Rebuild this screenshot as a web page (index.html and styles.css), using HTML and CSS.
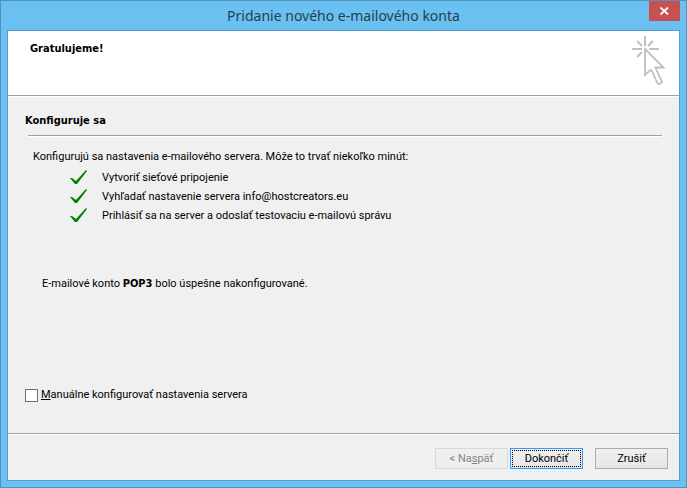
FILE: index.html
```html
<!DOCTYPE html>
<html lang="sk">
<head>
  <meta charset="UTF-8">
  <title>Pridanie nového e-mailového konta</title>
  <link rel="stylesheet" href="styles.css">
</head>
<body>
<div class="window">
  <div class="title-bar">
    <h1>Pridanie nového e-mailového konta</h1>
    <button type="button" class="close" aria-label="Zavrieť">
      <svg width="9" height="8" viewBox="0 0 9 8">
        <path d="M0.5 0.5L8 7.5M8 0.5L0.5 7.5" stroke="#fff" stroke-width="1.8"/>
      </svg>
    </button>
  </div>
  <form class="dialog">
    <div class="header">
      <h2>Gratulujeme!</h2>
      <svg class="wizard-icon" width="34" height="50" viewBox="0 0 34 50" fill="none" stroke="#c0c0c0">
        <path d="M13 0V10M0 13H10M17 13H27M5 5L10 10M21 5L16 10M5 21L10 16" stroke-width="2"/>
        <path d="M13 13V39L18.5 34L20 35L25.5 47.5Q28 49 30 46L24.5 34L23.5 31.5H31.5Z" stroke-width="1.8"/>
      </svg>
    </div>
    <div class="content">
      <h3>Konfiguruje sa</h3>
      <hr>
      <p class="intro">Konfigurujú sa nastavenia e-mailového servera. Môže to trvať niekoľko minút:</p>
      <ul class="steps">
        <li>
          <svg class="check" width="18" height="15" viewBox="0 0 18 15"><path d="M0 8L2 8L6 11L16 0L17 1L7 14L5 14Z" fill="#008000"/></svg>
          Vytvoriť sieťové pripojenie
        </li>
        <li>
          <svg class="check" width="18" height="15" viewBox="0 0 18 15"><path d="M0 8L2 8L6 11L16 0L17 1L7 14L5 14Z" fill="#008000"/></svg>
          Vyhľadať nastavenie servera info@hostcreators.eu
        </li>
        <li>
          <svg class="check" width="18" height="15" viewBox="0 0 18 15"><path d="M0 8L2 8L6 11L16 0L17 1L7 14L5 14Z" fill="#008000"/></svg>
          Prihlásiť sa na server a odoslať testovaciu e-mailovú správu
        </li>
      </ul>
      <p class="result">E-mailové konto <b>POP3</b> bolo úspešne nakonfigurované.</p>
      <label class="manual"><input type="checkbox"><span><u>M</u>anuálne konfigurovať nastavenia servera</span></label>
    </div>
    <div class="footer">
      <button type="button" disabled>&lt; Na<u>s</u>päť</button>
      <button type="button" class="default">Dokončiť</button>
      <button type="button" class="cancel">Zrušiť</button>
    </div>
  </form>
</div>
</body>
</html>
```
FILE: styles.css
```css
* {
  box-sizing: border-box;
}
body {
  margin: 0;
  font: 11px/14px Roboto, sans-serif;
  color: #000;
}
h1, h2, h3, p, ul {
  margin: 0;
  padding: 0;
}
.window {
  display: flex;
  flex-direction: column;
  min-height: 100vh;
  padding: 0 6px 6px;
  border: 1px solid #5092b8;
  background: #69c0f1;
}
.title-bar {
  position: relative;
  height: 29px;
}
h1 {
  font: 14px/29px "Noto Sans", sans-serif;
  text-align: center;
  color: #24404f;
}
.close {
  position: absolute;
  top: 0;
  right: 0;
  display: flex;
  align-items: center;
  justify-content: center;
  width: 31px;
  height: 20px;
  padding: 0;
  border: 0;
  background: #c75050;
}
.dialog {
  flex: 1;
  display: flex;
  flex-direction: column;
  border: 1px solid #519fca;
  background: #f0f0f0;
}
.header {
  display: flex;
  justify-content: space-between;
  height: 65px;
  padding: 5px 13px 0 22px;
  border-bottom: 1px solid #a0a0a0;
  background: #fff;
}
h2, h3, b {
  font: bold 11px/14px "DejaVu Sans Condensed", "DejaVu Sans", sans-serif;
}
h2 {
  padding-top: 6px;
}
.content {
  flex: 1;
  display: flex;
  flex-direction: column;
  padding: 17px 17px 31px;
  border-top: 1px solid #fff;
}
hr {
  width: auto;
  margin: 7px 0 0 3px;
  border: 0;
  border-top: 1px solid #a0a0a0;
  border-bottom: 1px solid #fff;
}
.intro {
  margin-top: 13px;
  padding-left: 8px;
}
.steps {
  margin-top: 4px;
  padding-left: 45px;
  list-style: none;
}
.steps li {
  display: flex;
  align-items: center;
  gap: 14px;
  height: 19px;
}
.result {
  margin-top: 52px;
  padding-left: 17px;
}
.manual {
  display: flex;
  align-items: center;
  gap: 3px;
  margin-top: auto;
}
.manual input {
  appearance: none;
  width: 13px;
  height: 13px;
  margin: 0;
  border: 1px solid #707070;
  background: #fff;
}
.manual input:checked {
  background: #008000;
}
.footer {
  display: flex;
  justify-content: flex-end;
  gap: 2px;
  padding: 14px 11px 11px;
  border-top: 1px solid #a0a0a0;
  box-shadow: inset 0 1px #fff;
}
.footer button {
  width: 73px;
  height: 21px;
  padding: 0;
  border: 1px solid #acacac;
  background: linear-gradient(#f0f0f0, #e5e5e5);
  font: inherit;
  color: #000;
}
.footer button:disabled {
  border-color: #d9d9d9;
  background: #efefef;
  color: #838383;
}
.footer .default {
  border-color: #3399ff;
  outline: 1px dotted #000;
  outline-offset: -3px;
}
.footer .cancel {
  margin-left: 10px;
}
```
